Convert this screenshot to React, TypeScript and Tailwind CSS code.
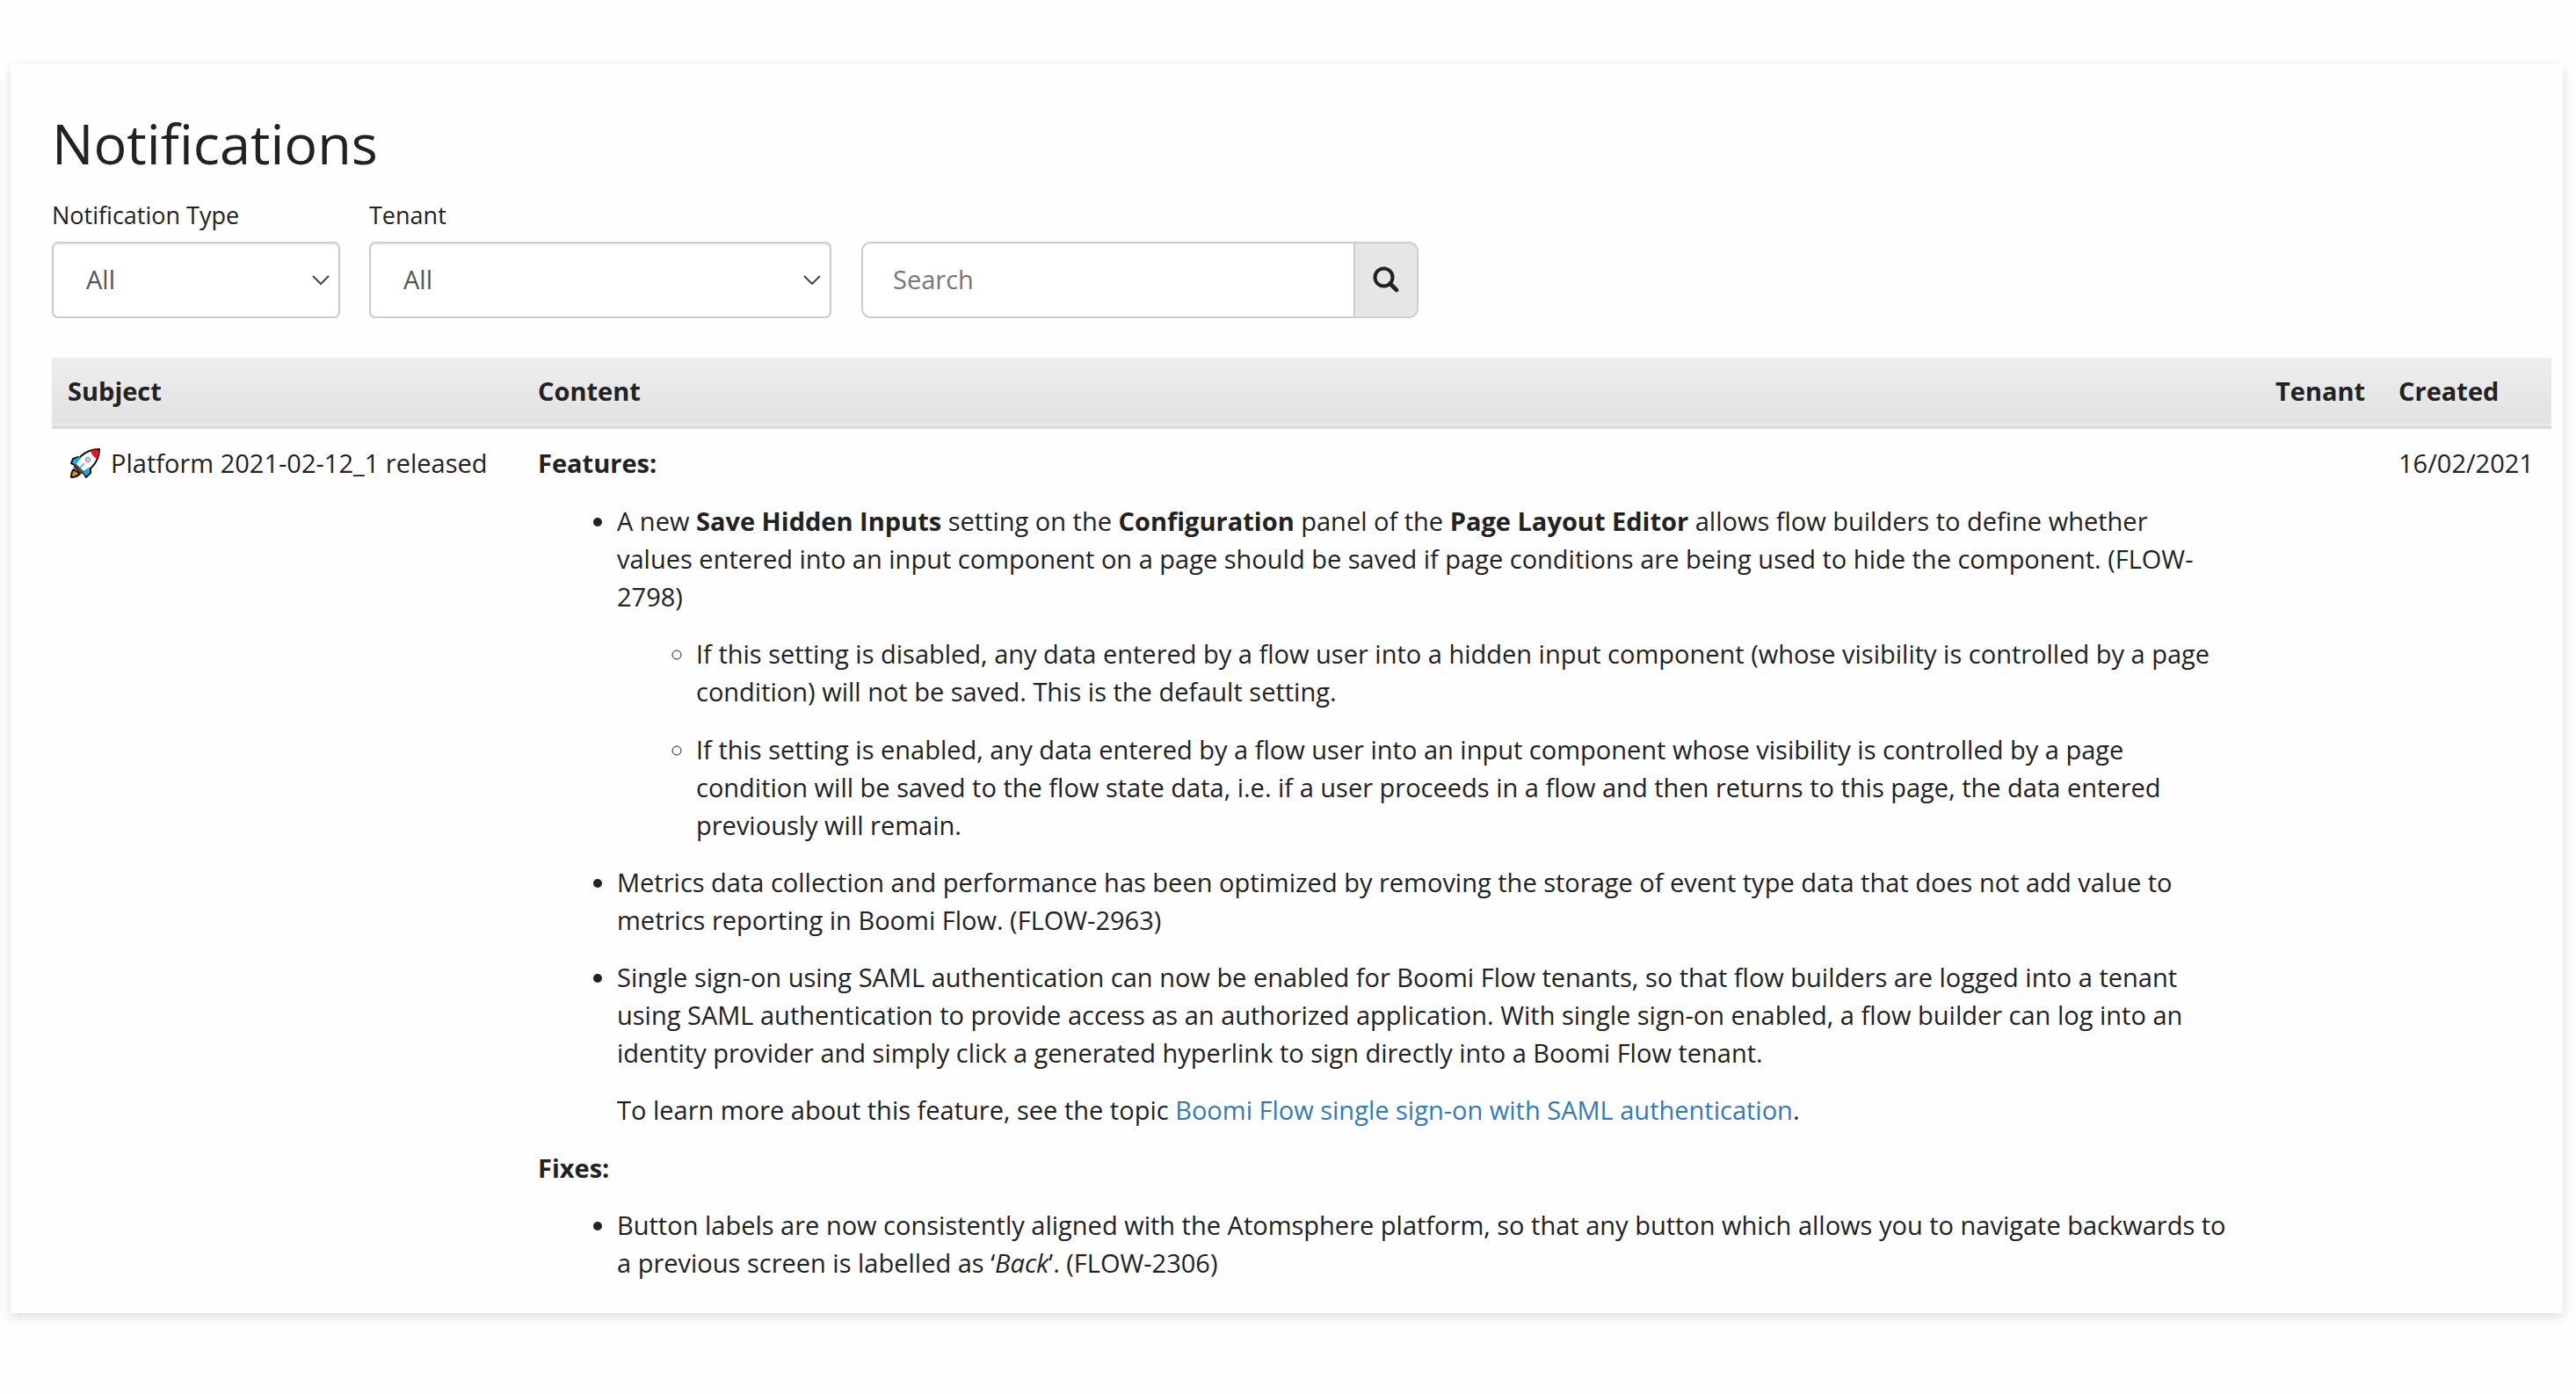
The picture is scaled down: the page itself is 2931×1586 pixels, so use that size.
import React, { useState } from "react";

function RocketIcon() {
  return (
    <svg viewBox="0 0 34 34" className="mr-[12px] ml-[3px] inline-block size-[34px] align-[-6px]" aria-hidden="true">
      <path d="M9 10 L3 12 L1 17 L5 19 L7 23 Z" fill="#00a4ef" stroke="#111" strokeWidth="2" strokeLinejoin="round" />
      <path d="M23 21 L23 28 L18 33 L15 28 L11 26 Z" fill="#00a4ef" stroke="#111" strokeWidth="2" strokeLinejoin="round" />
      <path d="M4 24 Q1 27 1 33 Q7 33 11 29 Z" fill="#f7891c" stroke="#111" strokeWidth="2" strokeLinejoin="round" />
      <path d="M5 21 L12 28 L15 27 L24 22 Q33 13 33 1 Q21 1 12 9 L6 17 Z" fill="#fff" stroke="#111" strokeWidth="2" strokeLinejoin="round" />
      <path d="M3 14 L9 10 L12 11 L6 19 L3 17 Z" fill="#18a9e6" />
      <path d="M18 31 L22 28 L22 22 L14 27 L16 29 Z" fill="#18a9e6" />
      <path d="M5 20 L7 18 L15 26 L12 29 Z" fill="#4a4a4a" />
      <path d="M23 3 Q28 1 32 2 Q32 7 30 12 Q25 9 23 3 Z" fill="#e81123" />
      <path d="M11 22 L16 17" stroke="#18b4f0" strokeWidth="1.5" />
      <circle cx="20" cy="13" r="3" fill="#c4c4c4" stroke="#9a9a9a" strokeWidth="1" />
    </svg>
  );
}

function Dropdown({ id, label, width }: { id: string; label: string; width: string }) {
  return (
    <div className={width}>
      <label htmlFor={id} className="block text-[27px] leading-[39px]">
        {label}
      </label>
      <div className="relative mt-[11px]">
        <select
          id={id}
          className="block h-[87px] w-full appearance-none rounded-[7px] border-2 border-[#ccc] bg-white pr-[40px] pb-[2px] pl-[37px] text-[29px] text-[#555] shadow-[inset_0_2px_2px_rgba(0,0,0,0.075)]"
        >
          <option>All</option>
        </select>
        <svg viewBox="0 0 20 11" className="pointer-events-none absolute top-[38px] right-[12px] h-[11px] w-[20px]" aria-hidden="true">
          <path d="M1 1 L10 10 L19 1" fill="none" stroke="#444" strokeWidth="2" />
        </svg>
      </div>
    </div>
  );
}

export default function App() {
  const [query, setQuery] = useState("");
  return (
    <div className="min-h-screen bg-[#fefefe] pt-[73px] pr-[15px] pb-[91px] pl-[12px] font-['Open_Sans',sans-serif] text-[29px] leading-[43px] text-[#222]">
      <main className="bg-[#fefefe] pt-[46px] pr-[13px] pb-[36px] pl-[47px] shadow-[0_4px_12px_rgba(0,0,0,0.13)]">
        <h1 className="text-[63px] leading-[88px]">Notifications</h1>
        <form className="mt-[18px] flex items-end" onSubmit={(e) => e.preventDefault()}>
          <Dropdown id="type" label="Notification Type" width="mr-[33px] w-[328px]" />
          <Dropdown id="tenant" label="Tenant" width="mr-[34px] w-[526px]" />
          <div className="flex h-[87px] w-[634px] overflow-hidden rounded-[11px] border-2 border-[#ccc]">
            <input
              type="text"
              aria-label="Search"
              placeholder="Search"
              value={query}
              onChange={(e) => setQuery(e.target.value)}
              className="min-w-0 flex-1 bg-white pb-[2px] pl-[34px] text-[29px] text-[#555] outline-none placeholder:text-[#777]"
            />
            <button type="submit" aria-label="Search" className="flex w-[72px] items-center justify-center border-l-2 border-[#ccc] bg-[#e6e6e6] pb-[2px]">
              <svg viewBox="0 0 30 30" className="size-[30px]" aria-hidden="true">
                <circle cx="12.5" cy="12.5" r="10" fill="none" stroke="#222" strokeWidth="4" />
                <path d="M19.5 19.5 L27 27" stroke="#222" strokeWidth="4.6" strokeLinecap="round" />
              </svg>
            </button>
          </div>
        </form>
        <table className="mt-[45px] w-full table-fixed text-left">
          <colgroup>
            <col className="w-[535px]" />
            <col />
            <col className="w-[140px]" />
            <col className="w-[192px]" />
          </colgroup>
          <thead>
            <tr className="border-b-4 border-[#ddd] bg-linear-to-b from-[#eee] to-[#e2e2e2] [&>th]:px-[18px] [&>th]:pt-[16px] [&>th]:pb-[18px] [&>th]:font-bold">
              <th>Subject</th>
              <th>Content</th>
              <th>Tenant</th>
              <th>Created</th>
            </tr>
          </thead>
          <tbody>
            <tr className="align-top [&>td]:px-[18px] [&>td]:pt-[17px]">
              <td className="whitespace-nowrap">
                <RocketIcon />
                Platform 2021-02-12_1 released
              </td>
              <td>
                <p className="mb-[23px]"><b>Features:</b></p>
                <ul className="mb-[23px] list-disc space-y-[22px] pl-[90px]">
                  <li>
                    <p className="mb-[22px]">
                      A new <b>Save Hidden Inputs</b> setting on the <b>Configuration</b> panel of the <b>Page Layout Editor</b> allows flow
                      builders to define whether values&nbsp;entered into an input component on a page should be saved if page conditions are
                      being used to hide the component. (FLOW-<wbr />2798)
                    </p>
                    <ul className="list-[circle] space-y-[23px] pl-[90px]">
                      <li>
                        If this setting is disabled, any data entered by a flow user into a hidden input component (whose visibility is
                        controlled by a page condition) will not be saved. This is the default setting.
                      </li>
                      <li>
                        If this setting is enabled, any data entered by a flow user into an input component whose visibility is controlled by
                        a page condition&nbsp;will be saved to the flow state data, i.e. if a user proceeds in a flow and then returns to this
                        page, the data entered previously will remain.
                      </li>
                    </ul>
                  </li>
                  <li>
                    Metrics data collection and performance has been optimized by removing the storage of event type data that does not add
                    value to metrics reporting in Boomi Flow. (FLOW-2963)
                  </li>
                  <li>
                    <p className="mb-[22px]">
                      Single sign-on using SAML authentication can now be enabled for Boomi Flow tenants, so that flow builders are logged
                      into a tenant using&nbsp;SAML authentication to provide access as an authorized application. With single sign-on
                      enabled, a flow builder can log into an identity provider and simply click a generated hyperlink to sign directly into a
                      Boomi Flow tenant.
                    </p>
                    <p>
                      To learn more about this feature, see the topic{" "}
                      <a href="#saml" className="text-[#337ab7]">Boomi Flow single sign-on with SAML authentication</a>.
                    </p>
                  </li>
                </ul>
                <p className="mb-[22px]"><b>Fixes:</b></p>
                <ul className="list-disc pl-[90px]">
                  <li>
                    Button labels are now consistently aligned with the Atomsphere platform, so that any button which allows you to navigate
                    backwards to a&nbsp;previous screen is labelled as ‘<i>Back</i>’. (FLOW-2306)
                  </li>
                </ul>
              </td>
              <td />
              <td>16/02/2021</td>
            </tr>
          </tbody>
        </table>
      </main>
    </div>
  );
}
